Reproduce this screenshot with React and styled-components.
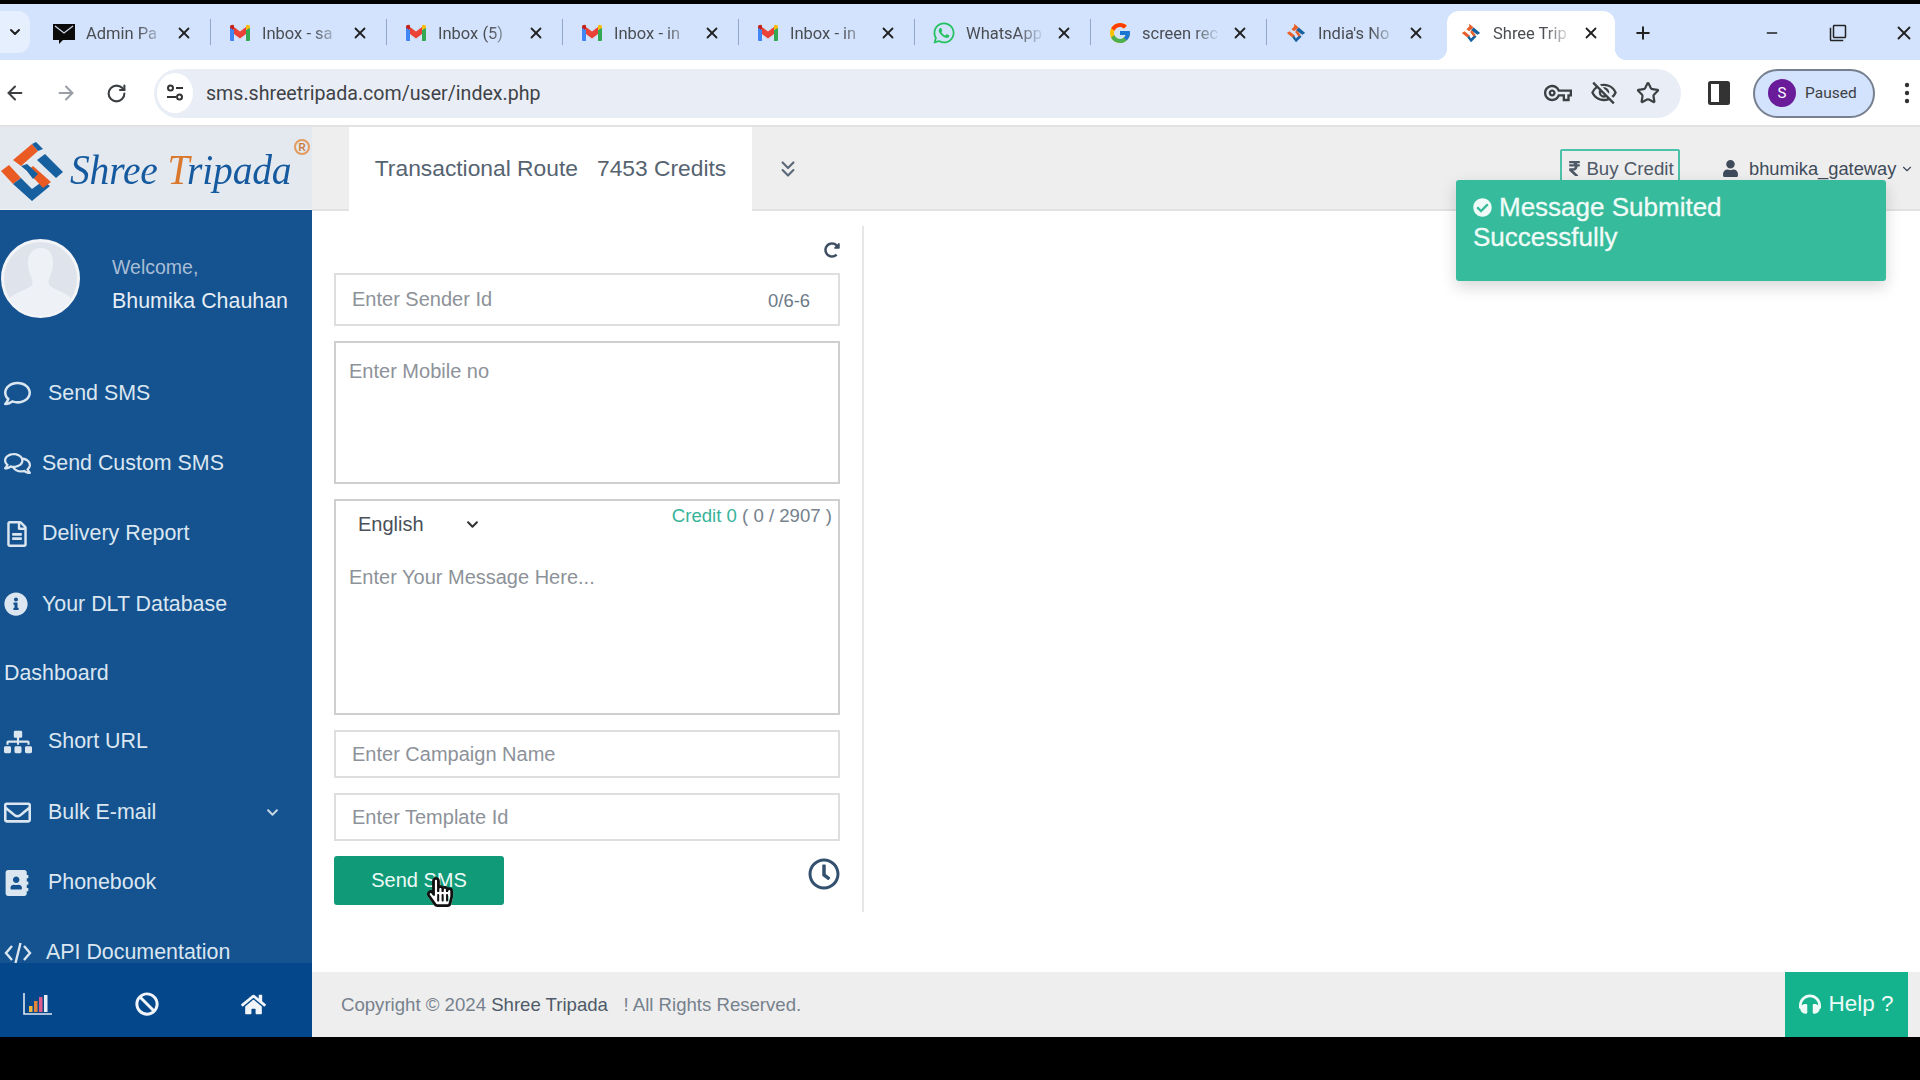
import React from 'react';
import styled, {createGlobalStyle} from 'styled-components';
import {ArrowLeft, ArrowRight, RotateCw, Star, X, Plus, Minus, ChevronDown, ChevronsDown} from 'lucide-react';
import {MdOutlineVpnKey, MdOutlineVisibilityOff, MdOutlineFilterNone} from 'react-icons/md';
import {FcGoogle} from 'react-icons/fc';
import {
  FaWhatsapp, FaRegComment, FaRegComments, FaRegFileAlt, FaInfoCircle, FaSitemap, FaRegEnvelope,
  FaAddressBook, FaBan, FaHome, FaRedoAlt, FaRegClock, FaRupeeSign, FaUser,
  FaCheckCircle, FaHeadphones, FaChevronDown, FaHandPointer, FaRegHandPointer,
} from 'react-icons/fa';

const GlobalStyle = createGlobalStyle`
  html, body { margin: 0; padding: 0; background: #000; }
  * { box-sizing: border-box; }
  body { font-family: "Liberation Sans", Arial, sans-serif; }
`;

const Screen = styled.div`
  width: 1920px;
  height: 1080px;
  background: #000;
  padding: 4px 0 43px;
  display: flex;
  flex-direction: column;
  overflow: hidden;
`;

/* browser chrome */
const TabStrip = styled.div`
  height: 56px;
  background: #d3e3fd;
  display: flex;
  align-items: flex-end;
  flex-shrink: 0;
`;
const TabSearch = styled.div`
  width: 30px;
  height: 42px;
  margin: 0 5px 7px 0;
  background: #e6effd;
  border-radius: 0 12px 12px 0;
  display: flex;
  align-items: center;
  justify-content: center;
  color: #1f1f1f;
`;
const Tab = styled.div`
  position: relative;
  width: ${p => p.$active ? '168px' : '176px'};
  height: 49px;
  margin-left: ${p => p.$active ? '4px' : '0'};
  margin-right: ${p => p.$active ? '4px' : '0'};
  padding: 0 0 5px ${p => p.$active ? '12px' : '17px'};
  display: flex;
  align-items: center;
  background: ${p => p.$active ? '#fff' : 'transparent'};
  border-radius: 12px 12px 0 0;
  ${p => p.$active && `
    &::before, &::after {
      content: '';
      position: absolute;
      bottom: 0;
      width: 12px;
      height: 12px;
    }
    &::before {
      left: -12px;
      background: radial-gradient(circle at 0 0, transparent 12px, #fff 12.500px);
    }
    &::after {
      right: -12px;
      background: radial-gradient(circle at 100% 0, transparent 12px, #fff 12.500px);
    }
  `}
  ${p => !p.$active && !p.$last && `
    &::after {
      content: '';
      position: absolute;
      right: 0;
      top: 8px;
      height: 26px;
      width: 1px;
      background: #8fa8cc;
    }
  `}
`;
const Favicon = styled.span`
  width: 24px;
  height: 24px;
  display: flex;
  align-items: center;
  justify-content: center;
  flex-shrink: 0;
  margin-right: 10px;
`;
const TabTitle = styled.span`
  width: 86px;
  font-family: Roboto, sans-serif;
  font-size: 16.5px;
  color: #4a4d52;
  white-space: nowrap;
  -webkit-mask-image: linear-gradient(90deg, #000 60%, transparent 92%);
  mask-image: linear-gradient(90deg, #000 60%, transparent 92%);
`;
const TabClose = styled.span`
  display: flex;
  margin-left: 3px;
  color: #222;
`;
const NewTab = styled.div`
  display: flex;
  margin: 0 0 17px 14px;
  color: #222;
`;
const WindowControls = styled.div`
  margin-left: auto;
  display: flex;
  align-items: center;
  gap: 42px;
  padding: 0 4px 16px 0;
  color: #222;
`;
const WindowButton = styled.span`
  width: 24px;
  display: flex;
  justify-content: center;
`;
const Toolbar = styled.div`
  height: 67px;
  background: #fff;
  border-bottom: 2px solid #e2e2e2;
  display: flex;
  align-items: center;
  flex-shrink: 0;
  padding: 1px 0 0 4px;
`;
const NavButton = styled.span`
  display: flex;
  width: 22px;
  margin-right: ${p => p.$gap || 29}px;
  color: ${p => p.$dim ? '#9a9ea6' : '#3c4043'};
`;
const UrlBar = styled.div`
  width: 1527px;
  height: 49px;
  margin-left: -1px;
  background: #e9eef6;
  border-radius: 25px;
  display: flex;
  align-items: center;
  padding-right: 21px;
`;
const SiteInfo = styled.span`
  width: 36px;
  height: 40px;
  margin: 0 13px 0 3px;
  background: #fff;
  border-radius: 50%;
  display: flex;
  align-items: center;
  justify-content: center;
`;
const UrlText = styled.span`
  font-family: Roboto, sans-serif;
  font-size: 19.6px;
  color: #3f4347;
`;
const UrlIcons = styled.div`
  margin-left: auto;
  display: flex;
  align-items: center;
  gap: 18px;
  color: #3c4043;
`;
const SidePanelIcon = styled.svg`
  margin-left: 27px;
`;
const ProfilePill = styled.div`
  width: 122px;
  height: 49px;
  margin-left: 23px;
  background: #d3e3fd;
  border: 2px solid #76808f;
  border-radius: 25px;
  display: flex;
  align-items: center;
  padding-left: 13px;
`;
const ProfileBadge = styled.span`
  width: 28px;
  height: 28px;
  border-radius: 50%;
  background: #6a1b9a;
  color: #fff;
  font-size: 15px;
  font-family: Roboto, sans-serif;
  display: flex;
  align-items: center;
  justify-content: center;
  margin-right: 9px;
`;
const ProfileName = styled.span`
  font-family: Roboto, sans-serif;
  font-size: 15.5px;
  color: #3c4043;
`;
const MenuDots = styled.svg`
  margin-left: 29px;
`;

/* page */
const Shell = styled.div`
  position: relative;
  flex: 1;
  min-height: 0;
  display: flex;
  background: #fff;
`;
const Sidebar = styled.aside`
  width: 312px;
  flex-shrink: 0;
  display: flex;
  flex-direction: column;
  background: #14538f;
`;
const LogoBox = styled.div`
  position: relative;
  height: 83px;
  background: #e4e8ef;
  display: flex;
  align-items: center;
  flex-shrink: 0;
  border-bottom: 1px solid #f2f4f7;
`;
const LogoMark = styled.svg`
  flex-shrink: 0;
  margin: 8px 6px 0 0;
`;
const LogoText = styled.span`
  font-family: "Liberation Serif", serif;
  font-style: italic;
  font-size: 43px;
  letter-spacing: -0.2px;
  color: #155a9f;
  white-space: nowrap;
  transform: scaleX(0.92);
  transform-origin: left center;
  padding-top: 2px;
`;
const LogoAccent = styled.span`
  color: #d9782d;
`;
const Registered = styled.span`
  position: absolute;
  left: 294px;
  top: 12px;
  width: 16px;
  height: 16px;
  border: 2px solid #e39a5f;
  border-radius: 50%;
  color: #c97c3f;
  font-size: 10px;
  font-weight: bold;
  display: flex;
  align-items: center;
  justify-content: center;
`;
const Profile = styled.div`
  height: 148px;
  flex-shrink: 0;
  padding: 29px 0 0 1px;
  display: flex;
`;
const Avatar = styled.div`
  width: 79px;
  height: 79px;
  border-radius: 50%;
  border: 3px solid #f2f4f8;
  background: #dfe4ec;
  overflow: hidden;
  flex-shrink: 0;
`;
const ProfileText = styled.div`
  margin-left: 32px;
  padding-top: 15px;
`;
const Welcome = styled.div`
  font-size: 19.5px;
  line-height: 27px;
  color: #a9bdd6;
`;
const UserName = styled.div`
  margin-top: 7px;
  font-size: 21.4px;
  line-height: 27px;
  color: #e6edf5;
`;
const Nav = styled.nav`
  flex: 1;
  min-height: 0;
  overflow: hidden;
`;
const NavItem = styled.div`
  height: ${p => p.$height || 70.4}px;
  padding-left: 4px;
  display: flex;
  align-items: center;
  color: #dbe6f1;
  font-size: 21.4px;
`;
const NavIcon = styled.span`
  width: ${p => p.$slot}px;
  display: flex;
  align-items: center;
  flex-shrink: 0;
  color: #dbe6f1;
`;
const NavCaret = styled.span`
  margin-left: auto;
  margin-right: 33px;
  display: flex;
  color: #c4d4e4;
`;
const SideFooter = styled.div`
  height: 74px;
  flex-shrink: 0;
  background: #04478a;
  display: flex;
  align-items: center;
  justify-content: space-between;
  padding: 8px 46px 0 23px;
  color: #f1f4f8;
`;
const Main = styled.main`
  flex: 1;
  min-width: 0;
  display: flex;
  flex-direction: column;
`;
const Header = styled.header`
  height: 84px;
  flex-shrink: 0;
  background: #eee;
  border-bottom: 2px solid #e2e2e2;
  display: flex;
  align-items: flex-start;
`;
const RouteTab = styled.div`
  width: 403px;
  height: 84px;
  margin: 0 0 0 37px;
  background: #fff;
  display: flex;
  align-items: center;
  justify-content: center;
  padding-bottom: 2px;
  font-size: 22.8px;
  color: #566371;
  white-space: pre;
`;
const RouteToggle = styled.span`
  display: flex;
  margin: 29px 0 0 23px;
  color: #5b6877;
`;
const HeaderRight = styled.div`
  margin-left: auto;
  display: flex;
  align-items: flex-start;
  padding-top: 22px;
`;
const BuyCredit = styled.div`
  width: 120px;
  height: 39px;
  border: 2px solid #4cc2aa;
  border-radius: 2px;
  display: flex;
  align-items: center;
  justify-content: center;
  font-size: 18.7px;
  color: #4d5967;
  padding-top: 0;
  gap: 3px;
`;
const UserMenu = styled.div`
  height: 39px;
  margin-left: 42px;
  width: 198px;
  display: flex;
  align-items: center;
  font-size: 18.3px;
  color: #3f4b5a;
`;
const UserIcon = styled.span`
  display: flex;
  margin-right: 10px;
`;
const UserCaret = styled.span`
  display: flex;
  margin-left: 4px;
`;
const Toast = styled.div`
  position: absolute;
  left: 1456px;
  top: 53px;
  width: 430px;
  height: 101px;
  padding: 13px 17px;
  background: #36bb9c;
  border-radius: 3px;
  box-shadow: 0 6px 16px rgba(0, 0, 0, 0.16);
  color: #f0fbf8;
  font-size: 26px;
  line-height: 29px;
  -webkit-text-stroke: 0.3px #f0fbf8;
`;
const ToastIcon = styled.span`
  display: inline-block;
  vertical-align: -1px;
  margin-right: 7px;
`;
const ToastText = styled.div`
  width: 290px;
`;
const Content = styled.div`
  flex: 1;
  min-height: 0;
  padding: 15px 0 0 22px;
`;
const FormPanel = styled.form`
  width: 530px;
  padding: 16px 22px 7px 0;
  border-right: 2px solid #e7e7e7;
  display: flex;
  flex-direction: column;
  gap: 15px;
`;
const RefreshRow = styled.div`
  display: flex;
  justify-content: flex-end;
  height: 16px;
  color: #3d4e63;
`;
const FieldBox = styled.div`
  position: relative;
  width: 100%;
  height: ${p => p.$height}px;
  border: 2px solid ${p => p.$strong ? '#cfcfcf' : '#dedede'};
  background: #fff;
`;
const FieldInput = styled.input`
  width: 100%;
  height: 100%;
  border: 0;
  outline: 0;
  background: transparent;
  padding: 0 100px 0 16px;
  font: 20px "Liberation Sans", Arial, sans-serif;
  &::placeholder { color: #8d9299; opacity: 1; }
`;
const FieldArea = styled.textarea`
  display: block;
  width: 100%;
  height: ${p => p.$height || 100}px;
  border: 0;
  outline: 0;
  resize: none;
  background: transparent;
  padding: ${p => p.$top}px 13px 0;
  font: 20px/26px "Liberation Sans", Arial, sans-serif;
  &::placeholder { color: #8d9299; opacity: 1; }
`;
const Counter = styled.span`
  position: absolute;
  right: 28px;
  top: 15px;
  font-size: 18.4px;
  color: #6d7a88;
`;
const MessageTop = styled.div`
  display: flex;
  justify-content: space-between;
  align-items: flex-start;
  height: 45px;
`;
const LanguageSelect = styled.div`
  display: flex;
  align-items: center;
  padding: 10px 0 0 22px;
  font-size: 20px;
  line-height: 26px;
  color: #4a5058;
`;
const LanguageCaret = styled.span`
  display: flex;
  margin-left: 42px;
  color: #333;
`;
const CreditCount = styled.div`
  padding: 3px 6px 0 0;
  font-size: 18.6px;
  line-height: 24px;
  color: #76818d;
`;
const CreditValue = styled.span`
  color: #37b39a;
`;
const ActionRow = styled.div`
  display: flex;
  justify-content: space-between;
  align-items: flex-start;
  height: 49px;
`;
const SendButton = styled.button`
  position: relative;
  width: 170px;
  height: 49px;
  border: 0;
  border-radius: 3px;
  background: #119a78;
  color: #eefbf7;
  font: 20px "Liberation Sans", Arial, sans-serif;
  padding: 0;
`;
const HandCursor = styled.span`
  position: absolute;
  left: 91px;
  top: 21px;
  width: 25px;
  height: 32px;
  color: #fff;
  & svg { position: absolute; left: 0; top: 0; }
  & svg + svg { color: #111; }
`;
const ScheduleIcon = styled.span`
  display: flex;
  margin-top: 2px;
  color: #33506e;
`;
const PageFooter = styled.footer`
  height: 65px;
  flex-shrink: 0;
  margin-top: auto;
  background: #eee;
  display: flex;
  padding-right: 12px;
`;
const Copyright = styled.div`
  padding: 0 0 0 29px;
  align-self: center;
  font-size: 18.6px;
  color: #76818d;
  white-space: pre;
`;
const CopyrightBrand = styled.span`
  color: #4f5a68;
`;
const HelpButton = styled.div`
  margin-left: auto;
  width: 123px;
  background: #15b28e;
  color: #eefbf7;
  font-size: 22.5px;
  display: flex;
  align-items: center;
  justify-content: center;
  gap: 7px;
  padding-bottom: 2px;
`;

const GmailIcon = () => (
  <svg width="22" height="18" viewBox="0 0 22 18">
    <path d="M1 17V3l4 3v11H2a1 1 0 0 1-1-1z" fill="#4285f4" />
    <path d="M21 17V3l-4 3v11h3a1 1 0 0 0 1-1z" fill="#34a853" />
    <path d="M5 10V3l6 4.5L17 3v7l-6 4.5z" fill="#ea4335" />
    <path d="M1 4V3c0-2 2.5-3 4-1.5L5 6z" fill="#c5221f" />
    <path d="M21 4V3c0-2-2.500-3-4-1.500L17 6z" fill="#fbbc04" />
  </svg>
);

const MailBlackIcon = () => (
  <svg width="24" height="24" viewBox="0 0 24 24">
    <path d="M1 3h22v16H11l-4 4v-4H1z" fill="#0b0b0b" />
    <path d="M3 5l9 7 9-7" fill="none" stroke="#cfd8e8" strokeWidth="1.2" />
  </svg>
);

const BrandIcon = ({size = 22}) => (
  <svg width={size} height={size} viewBox="0 0 24 24">
    <path d="M10 2l5 4-5 4-3-2 3-3z" fill="#e8602c" />
    <path d="M15 6l7 6-3 2-7-5z" fill="#16609f" />
    <path d="M2 12l3-2 6 5-3 2z" fill="#e8602c" />
    <path d="M8 17l4 5 6-6-2-2-4 4-2-3z" fill="#16609f" />
    <path d="M11 11l2-2 4 5-2 2z" fill="#e8602c" />
  </svg>
);

const SiteTuneIcon = () => (
  <svg width="20" height="20" viewBox="0 0 20 20" fill="none" stroke="#333" strokeWidth="2">
    <circle cx="5.500" cy="5" r="2.500" />
    <path d="M11 5h7M2 14h9" />
    <circle cx="14.500" cy="14" r="2.500" />
  </svg>
);

const LogoPieces = () => (
  <LogoMark width="64" height="60" viewBox="0 0 64 60">
    <polygon points="13,18 32,2 38,9 21,24" fill="#ea5b24" />
    <polygon points="32,2 36,0 43,7 38,9" fill="#16609f" />
    <polygon points="37,18 45,12 63,30 56,36" fill="#16609f" />
    <polygon points="1,29 9,23 21,36 13,42" fill="#ea5b24" />
    <polygon points="13,42 32,59 50,44 43,39 32,47 21,36" fill="#16609f" />
    <polygon points="27,29 33,24 51,40 43,46" fill="#ea5b24" />
    <polygon points="21,24 27,22 38,32 33,37 27,29" fill="#16609f" />
  </LogoMark>
);

const AvatarFigure = () => (
  <svg width="73" height="73" viewBox="0 0 73 73">
    <path d="M24 20c0-9 6-14 13-14s12 5 12 14c0 6-1 10-3 14-1 3-2 6-1 9 3 4 15 7 20 11 3 3 4 9 4 19H2c0-10 2-16 6-19 5-4 17-7 20-11 1-3 0-6-1-9-2-4-3-8-3-14z" fill="#eef1f6" />
  </svg>
);

const CodeIcon = () => (
  <svg width="28" height="22" viewBox="0 0 28 22" fill="none" stroke="currentColor" strokeWidth="2.400">
    <path d="M8 4l-6 7 6 7M20 4l6 7-6 7M16.500 1l-5 20" />
  </svg>
);

const ChartIcon = () => (
  <svg width="29" height="22" viewBox="0 0 29 22">
    <path d="M1 0v21h28" fill="none" stroke="#dfe8f2" strokeWidth="1.6" />
    <rect x="6" y="13" width="3.500" height="6" fill="#f0b840" />
    <rect x="11" y="8" width="3.500" height="11" fill="#e2853c" />
    <rect x="16" y="4" width="3.500" height="15" fill="#de5b8a" />
    <rect x="21" y="2" width="3.500" height="17" fill="#e8eef6" />
  </svg>
);

const tabs = [
  {title: 'Admin Pa', icon: <MailBlackIcon />},
  {title: 'Inbox - sa', icon: <GmailIcon />},
  {title: 'Inbox (5)', icon: <GmailIcon />},
  {title: 'Inbox - in', icon: <GmailIcon />},
  {title: 'Inbox - in', icon: <GmailIcon />},
  {title: 'WhatsApp', icon: <FaWhatsapp size={24} color="#25c15f" />},
  {title: 'screen rec', icon: <FcGoogle size={24} />},
  {title: "India's No", icon: <BrandIcon />, last: true},
  {title: 'Shree Trip', icon: <BrandIcon />, active: true},
];

const navItems = [
  {label: 'Send SMS', slot: 44, icon: <FaRegComment size={27} />},
  {label: 'Send Custom SMS', slot: 38, icon: <FaRegComments size={27} />},
  {label: 'Delivery Report', slot: 38, icon: <FaRegFileAlt size={26} />},
  {label: 'Your DLT Database', slot: 38, icon: <FaInfoCircle size={24} />},
  {label: 'Dashboard', height: 67},
  {label: 'Short URL', slot: 44, icon: <FaSitemap size={28} />},
  {label: 'Bulk E-mail', slot: 44, icon: <FaRegEnvelope size={27} />, caret: true},
  {label: 'Phonebook', slot: 44, icon: <FaAddressBook size={26} />},
  {label: 'API Documentation', slot: 42, icon: <CodeIcon />},
];

export default function App() {
  return (
    <Screen>
      <GlobalStyle />
      <TabStrip>
        <TabSearch><ChevronDown size={16} strokeWidth={3} /></TabSearch>
        {tabs.map((tab, i) => (
          <Tab key={i} $active={tab.active} $last={tab.last}>
            <Favicon>{tab.icon}</Favicon>
            <TabTitle>{tab.title}</TabTitle>
            <TabClose><X size={18} strokeWidth={2.4} /></TabClose>
          </Tab>
        ))}
        <NewTab><Plus size={20} strokeWidth={2.4} /></NewTab>
        <WindowControls>
          <WindowButton><Minus size={16} strokeWidth={2.2} /></WindowButton>
          <WindowButton><MdOutlineFilterNone size={18} /></WindowButton>
          <WindowButton><X size={22} strokeWidth={2} /></WindowButton>
        </WindowControls>
      </TabStrip>

      <Toolbar>
        <NavButton><ArrowLeft size={22} strokeWidth={2.2} /></NavButton>
        <NavButton $dim><ArrowRight size={22} strokeWidth={2.2} /></NavButton>
        <NavButton $gap={27}><RotateCw size={21} strokeWidth={2.4} /></NavButton>
        <UrlBar>
          <SiteInfo><SiteTuneIcon /></SiteInfo>
          <UrlText>sms.shreetripada.com/user/index.php</UrlText>
          <UrlIcons>
            <MdOutlineVpnKey size={28} />
            <MdOutlineVisibilityOff size={28} />
            <Star size={24} strokeWidth={2.2} />
          </UrlIcons>
        </UrlBar>
        <SidePanelIcon width="22" height="24" viewBox="0 0 22 24">
          <rect x="1.500" y="1.500" width="19" height="21" fill="none" stroke="#333" strokeWidth="3" rx="1" />
          <rect x="11" y="2" width="9" height="20" fill="#333" />
        </SidePanelIcon>
        <ProfilePill>
          <ProfileBadge>S</ProfileBadge>
          <ProfileName>Paused</ProfileName>
        </ProfilePill>
        <MenuDots width="6" height="24" viewBox="0 0 6 24">
          <circle cx="3" cy="4" r="2.200" fill="#333" />
          <circle cx="3" cy="12" r="2.200" fill="#333" />
          <circle cx="3" cy="20" r="2.200" fill="#333" />
        </MenuDots>
      </Toolbar>

      <Shell>
        <Sidebar>
          <LogoBox>
            <LogoPieces />
            <LogoText>Shree <LogoAccent>T</LogoAccent>ripada</LogoText>
            <Registered>R</Registered>
          </LogoBox>
          <Profile>
            <Avatar><AvatarFigure /></Avatar>
            <ProfileText>
              <Welcome>Welcome,</Welcome>
              <UserName>Bhumika Chauhan</UserName>
            </ProfileText>
          </Profile>
          <Nav>
            {navItems.map(item => (
              <NavItem key={item.label} $height={item.height}>
                {item.icon && <NavIcon $slot={item.slot}>{item.icon}</NavIcon>}
                {item.label}
                {item.caret && <NavCaret><FaChevronDown size={13} /></NavCaret>}
              </NavItem>
            ))}
          </Nav>
          <SideFooter>
            <ChartIcon />
            <FaBan size={24} />
            <FaHome size={25} />
          </SideFooter>
        </Sidebar>

        <Main>
          <Header>
            <RouteTab>{'Transactional Route   7453 Credits'}</RouteTab>
            <RouteToggle><ChevronsDown size={26} strokeWidth={2} /></RouteToggle>
            <HeaderRight>
              <BuyCredit><FaRupeeSign size={17} />Buy Credit</BuyCredit>
              <UserMenu>
                <UserIcon><FaUser size={17} /></UserIcon>
                bhumika_gateway
                <UserCaret><ChevronDown size={14} /></UserCaret>
              </UserMenu>
            </HeaderRight>
          </Header>

          <Content>
            <FormPanel>
              <RefreshRow><FaRedoAlt size={16} /></RefreshRow>
              <FieldBox $height={53}>
                <FieldInput placeholder="Enter Sender Id" />
                <Counter>0/6-6</Counter>
              </FieldBox>
              <FieldBox $height={143} $strong>
                <FieldArea $height={139} $top={15} placeholder="Enter Mobile no" />
              </FieldBox>
              <FieldBox $height={216} $strong>
                <MessageTop>
                  <LanguageSelect>
                    English
                    <LanguageCaret><FaChevronDown size={13} /></LanguageCaret>
                  </LanguageSelect>
                  <CreditCount><CreditValue>Credit 0</CreditValue> ( 0 / 2907 )</CreditCount>
                </MessageTop>
                <FieldArea $height={167} $top={18} placeholder="Enter Your Message Here..." />
              </FieldBox>
              <FieldBox $height={48}><FieldInput placeholder="Enter Campaign Name" /></FieldBox>
              <FieldBox $height={48}><FieldInput placeholder="Enter Template Id" /></FieldBox>
              <ActionRow>
                <SendButton type="button">
                  Send SMS
                  <HandCursor>
                    <FaHandPointer size={30} />
                    <FaRegHandPointer size={30} />
                  </HandCursor>
                </SendButton>
                <ScheduleIcon><FaRegClock size={32} /></ScheduleIcon>
              </ActionRow>
            </FormPanel>
          </Content>

          <PageFooter>
            <Copyright>Copyright © 2024 <CopyrightBrand>Shree Tripada</CopyrightBrand>{'   ! All Rights Reserved.'}</Copyright>
            <HelpButton><FaHeadphones size={22} />Help ?</HelpButton>
          </PageFooter>
        </Main>

        <Toast>
          <ToastText>
            <ToastIcon><FaCheckCircle size={19} /></ToastIcon>Message Submited Successfully
          </ToastText>
        </Toast>
      </Shell>
    </Screen>
  );
}
